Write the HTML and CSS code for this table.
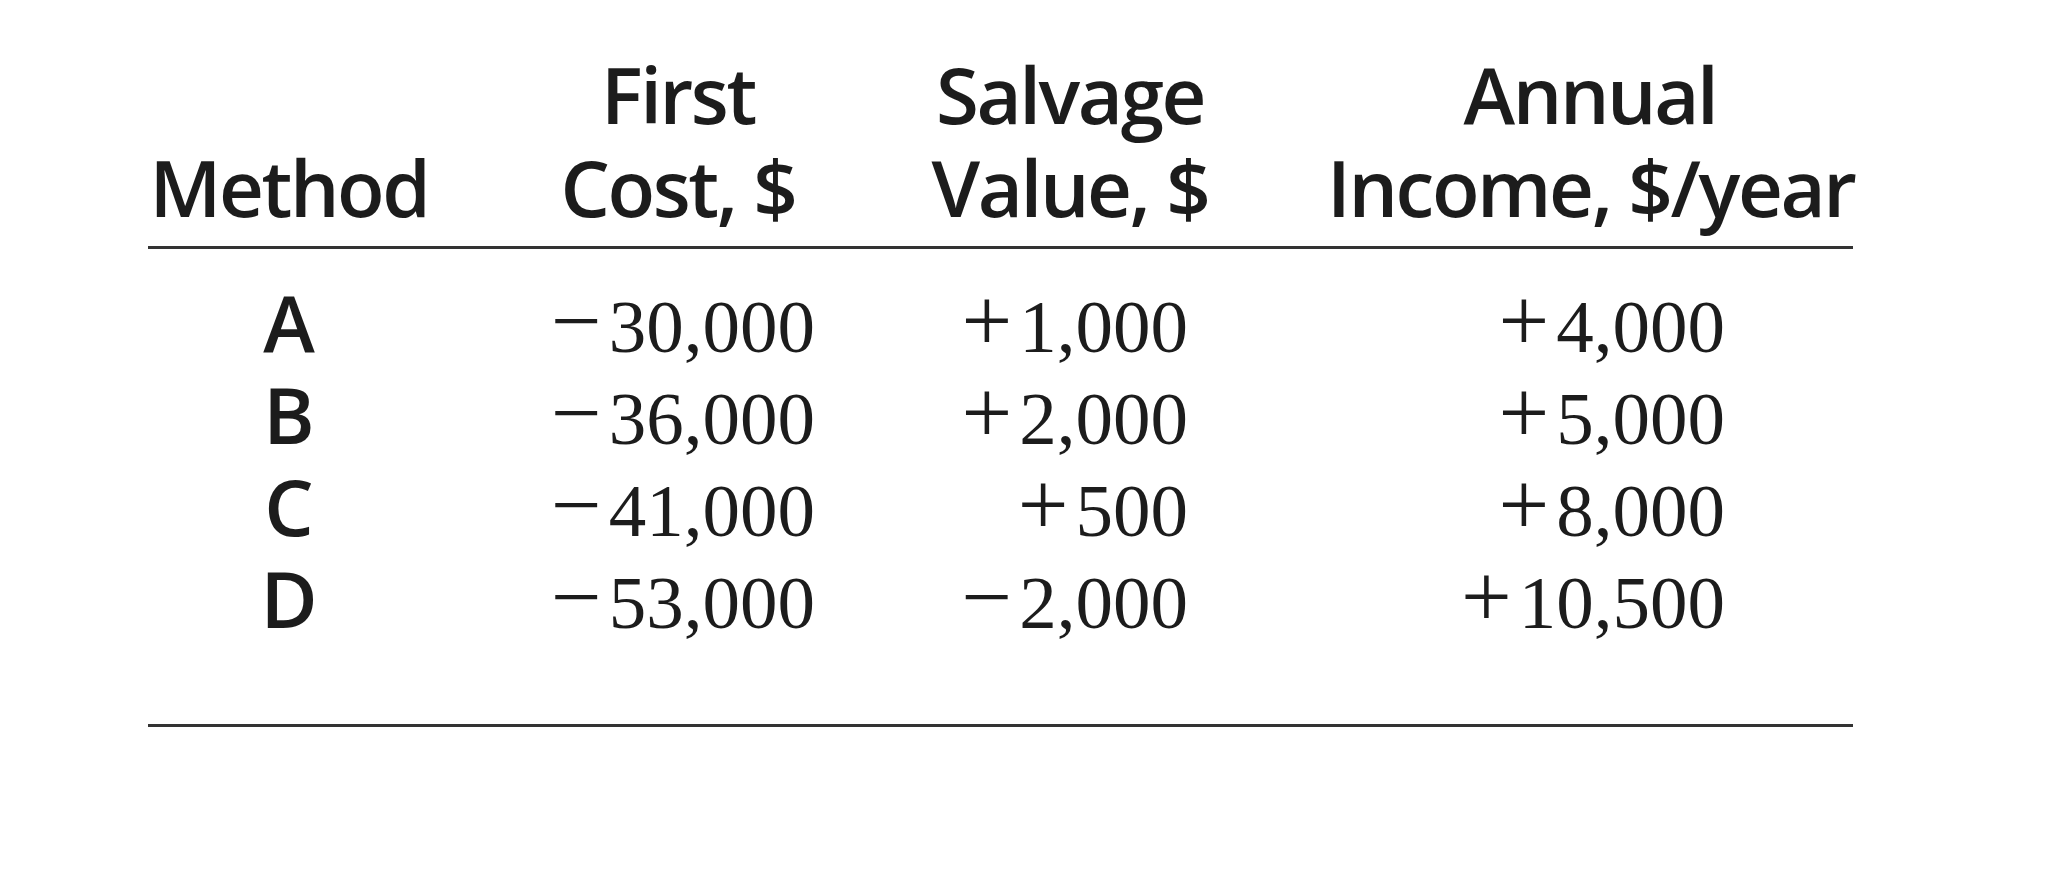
FILE: index.html
```html
<!DOCTYPE html>
<html lang="en">
<head>
<meta charset="utf-8">
<title>Methods</title>
<link rel="stylesheet" href="styles.css">
</head>
<body>
<table class="data">
  <colgroup>
    <col class="c-method">
    <col class="c-cost">
    <col class="c-salv">
    <col class="c-inc">
  </colgroup>
  <thead>
    <tr>
      <th class="h-method"><br>Method</th>
      <th class="h-cost">First<br>Cost, $</th>
      <th class="h-salv">Salvage<br>Value, $</th>
      <th class="h-inc">Annual<br>Income, $/year</th>
    </tr>
  </thead>
  <tbody>
    <tr class="first">
      <td class="m">A</td>
      <td class="n cost"><span class="sg">−</span>30,000</td>
      <td class="n salv"><span class="sg">+</span>1,000</td>
      <td class="n inc"><span class="sg">+</span>4,000</td>
    </tr>
    <tr>
      <td class="m">B</td>
      <td class="n cost"><span class="sg">−</span>36,000</td>
      <td class="n salv"><span class="sg">+</span>2,000</td>
      <td class="n inc"><span class="sg">+</span>5,000</td>
    </tr>
    <tr>
      <td class="m">C</td>
      <td class="n cost"><span class="sg">−</span>41,000</td>
      <td class="n salv"><span class="sg">+</span>500</td>
      <td class="n inc"><span class="sg">+</span>8,000</td>
    </tr>
    <tr class="last">
      <td class="m">D</td>
      <td class="n cost"><span class="sg">−</span>53,000</td>
      <td class="n salv"><span class="sg">−</span>2,000</td>
      <td class="n inc"><span class="sg">+</span>10,500</td>
    </tr>
  </tbody>
</table>
</body>
</html>
```

FILE: styles.css
```css
html, body {
  margin: 0;
  padding: 0;
  background: #ffffff;
}

body {
  padding: 48px 0 0 148px;
}

.data {
  border-collapse: collapse;
  table-layout: fixed;
  width: 1705px;
  color: #1c1c1c;
}

.c-method { width: 282px; }
.c-cost { width: 496px; }
.c-salv { width: 288px; }
.c-inc { width: 639px; }

.data th, .data td {
  padding: 0;
  box-sizing: border-box;
}

.data th {
  font-family: "Open Sans", "Liberation Sans", sans-serif;
  font-weight: 600;
  font-size: 78px;
  letter-spacing: -2.4px;
  line-height: 93px;
  text-align: center;
  vertical-align: bottom;
  padding-bottom: 12px;
  border-bottom: 3px solid #333333;
  white-space: nowrap;
}

.data .h-inc { padding-left: 113px; }

.data td {
  line-height: 92px;
  vertical-align: baseline;
  white-space: nowrap;
}

.data .first td { padding-top: 32px; }
.data .last td {
  padding-bottom: 75px;
  border-bottom: 3px solid #333333;
}

.data .m {
  font-family: "Open Sans", "Liberation Sans", sans-serif;
  font-weight: 600;
  font-size: 78px;
  line-height: 80px;
  text-align: center;
}

.data .n {
  font-family: "Liberation Serif", "Times New Roman", serif;
  font-size: 75px;
  text-align: right;
}

.data .cost { padding-right: 111px; }
.data .salv { padding-right: 26px; }
.data .inc { padding-right: 128px; }

.sg {
  font-size: 1.2em;
  line-height: 0;
  vertical-align: 1px;
  margin-right: 7px;
}
```
